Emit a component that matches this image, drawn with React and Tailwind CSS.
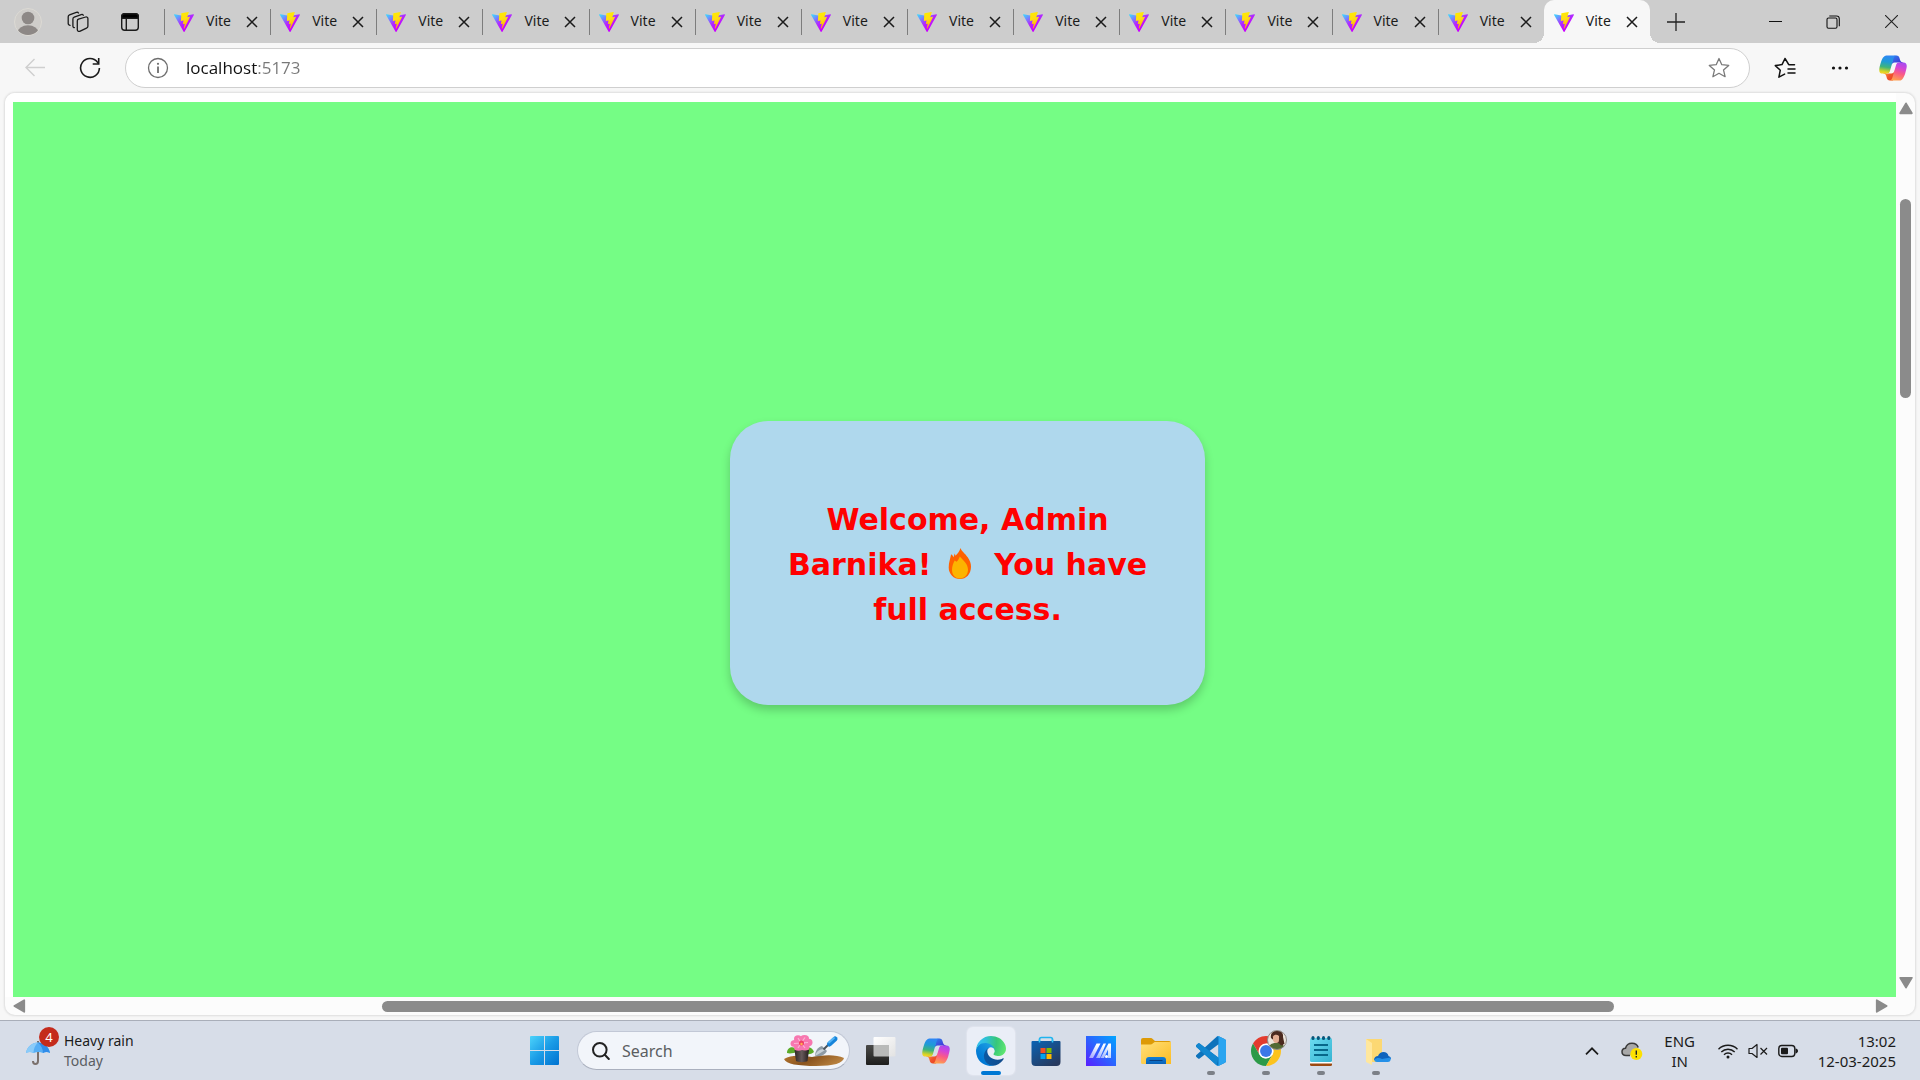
import React from "react";

const TABS = Array.from({ length: 14 }, (_, i) => ({ id: i, title: "Vite", active: i === 13 }));

/* Gradients shared by several icons */
function SharedGradients() {
  return (
    <svg className="absolute h-0 w-0" aria-hidden="true">
      <defs>
        <linearGradient id="viteBody" x1="0" y1="0.1" x2="0.6" y2="0.8">
          <stop offset="0" stopColor="#41d1ff" />
          <stop offset="0.6" stopColor="#b02cff" />
          <stop offset="1" stopColor="#c800ff" />
        </linearGradient>
        <linearGradient id="viteBolt" x1="0.4" y1="0" x2="0.6" y2="1">
          <stop offset="0" stopColor="#ffea00" />
          <stop offset="0.4" stopColor="#ffdd15" />
          <stop offset="1" stopColor="#ffa800" />
        </linearGradient>
        <linearGradient id="copA" x1="0.2" y1="0" x2="0.9" y2="1">
          <stop offset="0" stopColor="#2f7bea" />
          <stop offset="1" stopColor="#4a1fd0" />
        </linearGradient>
        <linearGradient id="copB" x1="0" y1="0.2" x2="1" y2="1">
          <stop offset="0" stopColor="#ffb03a" />
          <stop offset="0.5" stopColor="#f0542d" />
          <stop offset="1" stopColor="#e8401f" />
        </linearGradient>
        <linearGradient id="copC" x1="0.5" y1="0" x2="0.35" y2="1">
          <stop offset="0" stopColor="#2f86f6" />
          <stop offset="0.35" stopColor="#1e9bd6" />
          <stop offset="0.65" stopColor="#3fb57a" />
          <stop offset="0.9" stopColor="#d8d323" />
          <stop offset="1" stopColor="#f3d42b" />
        </linearGradient>
        <linearGradient id="copD" x1="0.7" y1="0" x2="0.4" y2="1">
          <stop offset="0" stopColor="#a64bf0" />
          <stop offset="0.3" stopColor="#d345d6" />
          <stop offset="0.6" stopColor="#fa5b86" />
          <stop offset="1" stopColor="#ffa04e" />
        </linearGradient>
      </defs>
    </svg>
  );
}

function ViteLogo() {
  return (
    <svg className="h-5 w-5 shrink-0" viewBox="0 0 256 257" aria-hidden="true">
      <path
        fill="url(#viteBody)"
        d="M255.153 37.938L134.897 252.976c-2.483 4.44-8.862 4.466-11.382.048L.875 37.958c-2.746-4.814 1.371-10.646 6.827-9.67l120.385 21.517a6.537 6.537 0 0 0 2.322-.004l117.867-21.483c5.438-.991 9.574 4.796 6.877 9.62Z"
      />
      <path
        fill="url(#viteBolt)"
        d="M185.432.063L96.44 17.501a3.268 3.268 0 0 0-2.634 3.014l-5.474 92.456a3.268 3.268 0 0 0 3.997 3.378l24.777-5.718c2.318-.535 4.413 1.507 3.936 3.838l-7.361 36.047c-.495 2.426 1.782 4.5 4.151 3.78l15.304-4.649c2.372-.72 4.652 1.36 4.15 3.788l-11.698 56.621c-.732 3.542 3.979 5.473 5.943 2.437l1.313-2.028l72.516-144.72c1.215-2.423-.88-5.186-3.54-4.672l-25.505 4.922c-2.396.462-4.435-1.77-3.759-4.114l16.646-57.705c.677-2.35-1.37-4.583-3.769-4.113Z"
      />
    </svg>
  );
}

function CopilotLogo() {
  return (
    <svg className="h-[30px] w-[30px]" viewBox="0 0 48 48" aria-hidden="true">
      <path fill="url(#copA)" d="M34.142 7.325A4.63 4.63 0 0 0 29.7 4h-1.35a4.63 4.63 0 0 0-4.554 3.794L21.48 20.407l.575-1.965a4.63 4.63 0 0 1 4.444-3.33h7.853l3.294 1.282 3.175-1.283h-.926a4.63 4.63 0 0 1-4.443-3.325l-1.31-4.461z" />
      <path fill="url(#copB)" d="M14.33 40.656A4.63 4.63 0 0 0 18.779 44h2.87a4.63 4.63 0 0 0 4.629-4.51l.312-12.163-.654 2.233a4.63 4.63 0 0 1-4.443 3.329h-7.919l-2.823-1.532-3.057 1.532h.912a4.63 4.63 0 0 1 4.447 3.344l1.279 4.423z" />
      <path fill="url(#copC)" d="M29.5 4H13.46c-4.583 0-7.332 6.057-9.165 12.113C2.123 23.29-.72 32.885 7.503 32.885h6.925a4.63 4.63 0 0 0 4.456-3.358 2077.9 2077.9 0 0 1 4.971-17.156c.843-2.843 1.544-5.284 2.621-6.805C27.08 4.714 28.086 4 29.5 4z" />
      <path fill="url(#copD)" d="M18.498 44h16.04c4.582 0 7.332-6.058 9.165-12.115 2.171-7.177 5.013-16.775-3.208-16.775h-6.926a4.63 4.63 0 0 0-4.456 3.358 2084.036 2084.036 0 0 1-4.972 17.16c-.842 2.843-1.543 5.285-2.62 6.806-.604.852-1.61 1.566-3.023 1.566z" />
    </svg>
  );
}

function IconButton({ label, className = "", children }) {
  return (
    <button type="button" aria-label={label} className={`flex shrink-0 items-center justify-center ${className}`}>
      {children}
    </button>
  );
}

function CloseGlyph() {
  return (
    <svg className="h-3 w-3" viewBox="0 0 12 12" fill="none" stroke="#1b1b1b" strokeWidth="1.5" aria-hidden="true">
      <path d="M1 1l10 10M11 1L1 11" />
    </svg>
  );
}

function Tab({ title, active }) {
  return (
    <div className={`relative flex h-full min-w-0 flex-1 items-center pl-2.5 ${active ? "rounded-t-[10px] bg-[#f7f7f7]" : ""}`}>
      {!active && <span className="absolute top-[9px] bottom-2 left-0 w-px bg-[#7d7d7d]" />}
      {active && (
        <>
          <span className="absolute bottom-0 -left-2.5 h-2.5 w-2.5 bg-[radial-gradient(circle_at_0_0,#cdcdcd_10px,#f7f7f7_10px)]" />
          <span className="absolute -right-2.5 bottom-0 h-2.5 w-2.5 bg-[radial-gradient(circle_at_100%_0,#cdcdcd_10px,#f7f7f7_10px)]" />
        </>
      )}
      <ViteLogo />
      <span className="ml-3 w-[26px] pb-0.5 text-[14px] leading-5 text-[#1b1b1b]">{title}</span>
      <IconButton label="Close tab" className="ml-2 h-6 w-6">
        <CloseGlyph />
      </IconButton>
    </div>
  );
}

function TitleBar() {
  return (
    <header className="flex h-[43px] shrink-0 items-center bg-[#cdcdcd]">
      <IconButton label="Profile" className="ml-3.5 h-7 w-7">
        <svg className="h-7 w-7" viewBox="0 0 28 28" aria-hidden="true">
          <clipPath id="profileClip"><circle cx="14" cy="14" r="13" /></clipPath>
          <circle cx="14" cy="14" r="13.5" fill="#cfcdca" stroke="#dcdad4" />
          <circle cx="14" cy="10" r="6.3" fill="#8d8886" />
          <ellipse cx="14" cy="24.5" rx="10.5" ry="7.2" fill="#8d8886" clipPath="url(#profileClip)" />
        </svg>
      </IconButton>
      <IconButton label="Workspaces" className="ml-5 h-8 w-8">
        <svg className="h-[22px] w-[22px]" viewBox="0 0 22 22" fill="none" stroke="#1b1b1b" strokeWidth="1.3" strokeLinejoin="round" strokeLinecap="round" aria-hidden="true">
          <path d="M11.5 8.2 18.7 6a1.7 1.7 0 0 1 2.2 1.6v7.6a2 2 0 0 1-1.4 1.9l-6.8 3.2a1.7 1.7 0 0 1-2.4-1.5V9.9a1.8 1.8 0 0 1 1.2-1.7z" />
          <path d="M7.4 16.6c-.7 0-1.5-.6-1.5-1.6V8a2 2 0 0 1 1.3-1.9l7-2.5c.9-.3 1.7 0 2.1.7" />
          <path d="M3.1 14.3c-1 0-1.9-.6-1.9-1.7V5.8a2 2 0 0 1 1.3-1.9l6.8-2.5c.9-.3 1.8-.1 2.2.6" />
        </svg>
      </IconButton>
      <IconButton label="Tab actions menu" className="ml-5 h-8 w-8">
        <svg className="h-5 w-5" viewBox="0 0 20 20" fill="none" stroke="#1b1b1b" strokeWidth="1.4" aria-hidden="true">
          <rect x="1.7" y="1.7" width="16.6" height="16.6" rx="3" />
          <path d="M1.7 6.3V4.5a2.8 2.8 0 0 1 2.8-2.8h11a2.8 2.8 0 0 1 2.8 2.8v1.8z" fill="#000" />
          <path d="M6.3 6v12" />
        </svg>
      </IconButton>
      <nav className="ml-[18px] flex h-full min-w-0 flex-1" aria-label="Tabs">
        {TABS.map((t) => (
          <Tab key={t.id} {...t} />
        ))}
      </nav>
      <IconButton label="New tab" className="ml-2.5 h-8 w-8">
        <svg className="h-[18px] w-[18px]" viewBox="0 0 18 18" stroke="#222" strokeWidth="1.3" aria-hidden="true">
          <path d="M9 0v18M0 9h18" />
        </svg>
      </IconButton>
      <div className="ml-[54px] flex h-full">
        <IconButton label="Minimize" className="h-full w-[58px]">
          <svg className="h-[13px] w-[13px]" viewBox="0 0 13 13" stroke="#111" aria-hidden="true"><path d="M0 6.5h13" /></svg>
        </IconButton>
        <IconButton label="Restore" className="h-full w-[58px]">
          <svg className="h-[14px] w-[14px]" viewBox="0 0 14 14" fill="none" stroke="#111" strokeWidth="1.1" aria-hidden="true">
            <rect x="1" y="3" width="10" height="10.3" rx="1.5" />
            <path d="M3.3 1h7.2a2.8 2.8 0 0 1 2.8 2.8v7.4" />
          </svg>
        </IconButton>
        <IconButton label="Close" className="h-full w-[58px]">
          <svg className="h-[13px] w-[13px]" viewBox="0 0 13 13" stroke="#222" strokeWidth="1.1" aria-hidden="true"><path d="M0 0l13 13M13 0L0 13" /></svg>
        </IconButton>
      </div>
    </header>
  );
}

function Toolbar() {
  return (
    <div className="flex h-[50px] shrink-0 items-center bg-[#f7f7f7]">
      <IconButton label="Back" className="ml-[19px] h-8 w-8">
        <svg className="h-5 w-5" viewBox="0 0 20 20" fill="none" stroke="#cfcfcf" strokeWidth="1.4" aria-hidden="true">
          <path d="M20 9.5H1M9.5 1 1 9.5l8.5 8.5" />
        </svg>
      </IconButton>
      <IconButton label="Refresh" className="ml-[23px] h-8 w-8">
        <svg className="h-[22px] w-[22px]" viewBox="0 0 22 22" fill="none" stroke="#1b1b1b" strokeWidth="1.6" aria-hidden="true">
          <path d="M20.4 11A9.4 9.4 0 1 1 18.6 5.4L19.6 6.6" />
          <path d="M19.7 1v6h-6" />
        </svg>
      </IconButton>
      <div className="ml-[19px] flex h-10 min-w-0 flex-1 items-center rounded-full border border-[#cfcfcf] bg-white pr-[19px] pl-[21px]">
        <IconButton label="View site information" className="h-[22px] w-[22px]">
          <svg className="h-[22px] w-[22px]" viewBox="0 0 22 22" fill="none" stroke="#6e6e6e" strokeWidth="1.3" aria-hidden="true">
            <circle cx="11" cy="11" r="9.5" />
            <path d="M11 9.5V16" strokeWidth="1.8" />
            <circle cx="11" cy="6.8" r="1.1" fill="#6e6e6e" stroke="none" />
          </svg>
        </IconButton>
        <input
          type="text"
          aria-label="Address"
          defaultValue="localhost:5173"
          className="ml-[17px] h-7 min-w-0 flex-1 bg-[linear-gradient(to_right,#111111_71px,#777777_71px)] bg-clip-text pb-px font-['Open_Sans','Noto_Sans',sans-serif] text-[17px] text-transparent outline-none"
        />
        <IconButton label="Add to favorites" className="h-[22px] w-[22px]">
          <svg className="h-[22px] w-[22px]" viewBox="0 0 22 22" fill="none" stroke="#7a7a7a" strokeWidth="1.3" strokeLinejoin="round" aria-hidden="true">
            <path d="m11 1.5 2.8 6.2 6.9.7-5.2 4.5 1.6 6.800-6.100-3.400-6.100 3.400 1.600-6.800L1.300 8.400l6.900-.7z" />
          </svg>
        </IconButton>
      </div>
      <IconButton label="Favorites" className="ml-[19px] h-8 w-8">
        <svg className="h-[22px] w-[22px]" viewBox="0 0 22 22" fill="none" stroke="#111" strokeWidth="1.5" strokeLinejoin="round" strokeLinecap="round" aria-hidden="true">
          <path d="M14.8 7.6 11 1.5 8 7.6 1.3 8.6l5 4.6-1.4 7 5.7-3.1M14 6.5l.8 1.2h5.7M14 12h7M14 16h7" />
        </svg>
      </IconButton>
      <IconButton label="Settings and more" className="ml-[23px] h-8 w-8">
        <svg className="h-1 w-[18px]" viewBox="0 0 18 4" fill="#111" aria-hidden="true">
          <circle cx="2.5" cy="2" r="1.6" /><circle cx="9" cy="2" r="1.6" /><circle cx="15.5" cy="2" r="1.6" />
        </svg>
      </IconButton>
      <IconButton label="Copilot" className="mr-[11px] ml-[21px] h-8 w-8">
        <CopilotLogo />
      </IconButton>
    </div>
  );
}

function FlameIcon() {
  return (
    <svg className="mr-3 ml-1.5 inline-block h-[31px] w-[24px] align-[-4px]" viewBox="0 0 24 31" role="img" aria-label="fire">
      <path fill="#ff6200" d="M12.5 0c.8 3 4.5 5.400 7.200 9.300 2.300 3.300 3.300 6.300 3.300 9.400C23 26 18.200 31 12 31S.7 26.200.7 19.500C.7 14 2.300 11 3.100 6.200c1.200.8 2 1.800 2.400 3l1.300-3.600.7 2.200C9.800 5.500 11.600 3.200 12.500 0z" />
      <path fill="#fcb400" d="M11.800 8.500c3.600 4 8.200 7.300 8.200 13.300 0 5-3.600 8.600-8 8.600s-8-3.500-8-8.500c0-3.700 1.300-7 2.700-9.400l1.800 1.300c1.500-1.300 2.600-3.100 3.300-5.300z" />
    </svg>
  );
}

function Triangle({ className, d }) {
  return (
    <svg className={className} viewBox="0 0 12 12" fill="#8b8b8b" stroke="#8b8b8b" strokeWidth="1.5" strokeLinejoin="round" aria-hidden="true">
      <path d={d} />
    </svg>
  );
}

function Viewport() {
  return (
    <main className="flex min-h-0 flex-1 flex-col bg-[#f7f7f7] px-[5px] pb-[5px]">
      <div className="flex min-h-0 flex-1 flex-col overflow-hidden rounded-[10px] bg-[#fcfcfc] shadow-[0_0_2px_1px_#dedede]">
        <div className="flex min-h-0 flex-1">
          <div className="flex min-w-0 flex-1 bg-white pt-[9px] pl-2">
            <section className="flex min-w-0 flex-1 items-center justify-center bg-[#75fd85] pl-[26px]">
              <div className="mt-[27px] flex w-[475px] items-center justify-center rounded-[38px] bg-[#afd8ed] px-12 pt-[76px] pb-[73px] shadow-[0_5px_10px_rgba(0,0,0,0.2)]">
                <h1 className="text-center font-['Verdana','DejaVu_Sans',sans-serif] text-[30px] leading-[45px] font-bold text-[#ff0000]">
                  Welcome, Admin
                  <br />
                  Barnika! <FlameIcon /> You have
                  <br />
                  full access.
                </h1>
              </div>
            </section>
          </div>
          <div className="flex w-[19px] shrink-0 flex-col items-center pt-2">
            <IconButton label="Scroll up" className="h-3.5 w-full">
              <Triangle className="h-3.5 w-3.5" d="M6 2 11 10.500H1z" />
            </IconButton>
            <div className="flex min-h-0 flex-1 flex-col">
              <div className="flex-[84]" />
              <div className="w-[11px] flex-[198] rounded-full bg-[#8b8b8b]" />
              <div className="flex-[577]" />
            </div>
            <IconButton label="Scroll down" className="mb-[7px] h-3.5 w-full">
              <Triangle className="h-3.5 w-3.5" d="M6 10 11 1.500H1z" />
            </IconButton>
          </div>
        </div>
        <div className="flex h-[18px] shrink-0 items-center pr-[26px] pl-[7px]">
          <IconButton label="Scroll left" className="h-full w-3.5">
            <Triangle className="h-3.5 w-3.5" d="M2 6 10.500 1v10z" />
          </IconButton>
          <div className="flex min-w-0 flex-1">
            <div className="flex-[356]" />
            <div className="h-[11px] flex-[1231] rounded-full bg-[#8b8b8b]" />
            <div className="flex-[261]" />
          </div>
          <IconButton label="Scroll right" className="h-full w-3.5">
            <Triangle className="h-3.5 w-3.5" d="M10 6 1.500 1v10z" />
          </IconButton>
        </div>
      </div>
    </main>
  );
}

function UmbrellaIcon() {
  return (
    <svg className="h-6 w-6" viewBox="0 0 24 24" fill="none" aria-hidden="true">
      <path d="M12 0v20c0 2-1 3-2.600 3S7 22 7 20" stroke="#7a706c" strokeWidth="2" />
      <path d="M0 12C1 6 6 1.500 12 1.500S23 6 24 12c-2-1.300-5-1.300-7 0-3-1.200-6-1.200-9.500 0-2.500-1.200-5-1.200-7.500 0z" fill="#56aef5" />
      <path d="M0 12C1 6 6 1.500 12 1.500 9 4 7.500 8 7.500 12c-2.500-1.200-5-1.200-7.500 0z" fill="#8acbf9" />
      <path d="M12 1.500C18 1.500 23 6 24 12c-2-1.300-5-1.300-7 0 0-4-2-8-5-10.500z" fill="#2f8cea" />
    </svg>
  );
}

function StartIcon() {
  return (
    <svg className="h-[29px] w-[29px]" viewBox="0 0 29 29" aria-hidden="true">
      <defs>
        <linearGradient id="start" gradientUnits="userSpaceOnUse" x1="0" y1="0" x2="29" y2="29">
          <stop offset="0" stopColor="#4cd3fb" />
          <stop offset="0.5" stopColor="#1a9be6" />
          <stop offset="1" stopColor="#0072d0" />
        </linearGradient>
      </defs>
      <path fill="url(#start)" d="M1 0h13v14H0V1a1 1 0 0 1 1-1zM15 0h13a1 1 0 0 1 1 1v13H15zM0 15h14v14H1a1 1 0 0 1-1-1zM15 15h14v13a1 1 0 0 1-1 1H15z" />
    </svg>
  );
}

function GardenArt() {
  return (
    <svg className="h-[31px] w-[60px] shrink-0" viewBox="0 0 60 31" aria-hidden="true">
      <defs>
        <linearGradient id="soil" x1="0" y1="0" x2="1" y2="0.3">
          <stop offset="0" stopColor="#b5762f" />
          <stop offset="0.5" stopColor="#8a541f" />
          <stop offset="1" stopColor="#b7803e" />
        </linearGradient>
        <linearGradient id="pot" x1="0" x2="1">
          <stop offset="0" stopColor="#2f2826" />
          <stop offset="0.5" stopColor="#66595a" />
          <stop offset="1" stopColor="#231d1c" />
        </linearGradient>
      </defs>
      <path fill="url(#soil)" d="M0 24c8-5 18-3 28-2 10-2 24-3 32 1-1 5-10 8-28 8S2 29 0 24z" />
      <path fill="#5cab2a" d="M3 18c0-4 3-7 8-5l2 4c-3 1-7 2-10 1zM30 17c-1-3-4-6-8-4l-1 4c2 3 5 3 9 0z" />
      <path fill="url(#pot)" d="M10.5 15h14.5l-1.5 11c-2 1.5-9.5 1.5-11.5 0z" />
      <g fill="#f777b0">
        <ellipse cx="11" cy="8.500" rx="4.500" ry="3.500" /><ellipse cx="14" cy="4" rx="4" ry="3.700" /><ellipse cx="20.500" cy="3.500" rx="4.500" ry="3.500" /><ellipse cx="24.500" cy="7.500" rx="4" ry="3.700" /><ellipse cx="21" cy="12" rx="4.500" ry="3.500" /><ellipse cx="14.500" cy="12.500" rx="4.500" ry="3.200" />
      </g>
      <path stroke="#fbb4d4" strokeWidth="1.2" d="M17 8l-7 .5M17 8l-3-5M17 8l4-5.500M17 8l7-.5M17 8l4 5M17 8l-3 5" />
      <circle cx="17.5" cy="8" r="2.600" fill="#ef4268" /><circle cx="17.500" cy="9" r="1.200" fill="#ffb14f" />
      <path fill="#8d9aa5" d="M31 21c0-5 3-9 7-10l5 5c-2 4-6 6-12 5z" />
      <path fill="#c6d0d8" d="M31 21c1-4 4-7 9-7l1 1c-3 2-6 4-10 6z" />
      <path stroke="#49525b" strokeWidth="2" d="m39.5 14.5 5-5" />
      <path stroke="#1684da" strokeWidth="5" strokeLinecap="round" d="m45.5 9 5.500-5" />
      <path stroke="#54b4f6" strokeWidth="1.8" strokeLinecap="round" d="m45 7.500 5-4.500" />
    </svg>
  );
}

function TaskViewIcon() {
  return (
    <svg className="h-[30px] w-[30px]" viewBox="0 0 30 30" aria-hidden="true">
      <defs>
        <linearGradient id="tvDark" x1="0" y1="0" x2="0" y2="1"><stop offset="0" stopColor="#4a4a48" /><stop offset="1" stopColor="#1e1e1d" /></linearGradient>
        <linearGradient id="tvLight" x1="0" y1="0" x2="1" y2="1"><stop offset="0" stopColor="#ffffff" /><stop offset="1" stopColor="#e2e2e2" /></linearGradient>
      </defs>
      <rect x="7.5" y="1" width="22" height="19.5" rx="1" fill="url(#tvLight)" />
      <rect x="0" y="9" width="23" height="20" rx="1" fill="url(#tvDark)" />
      <path d="M7.5 9H23v11.500H8.500a1 1 0 0 1-1-1z" fill="#b9bab9" />
    </svg>
  );
}

function EdgeIcon() {
  return (
    <svg className="h-[30px] w-[30px]" viewBox="0 0 256 256" aria-hidden="true">
      <defs>
        <linearGradient id="edgeA" x1="58" y1="177" x2="236" y2="177" gradientUnits="userSpaceOnUse"><stop offset="0" stopColor="#0c59a4" /><stop offset="1" stopColor="#114a8b" /></linearGradient>
        <linearGradient id="edgeB" x1="150" y1="98" x2="45" y2="212" gradientUnits="userSpaceOnUse"><stop offset="0" stopColor="#1b9de2" /><stop offset="0.2" stopColor="#1595df" /><stop offset="0.7" stopColor="#0680d7" /><stop offset="1" stopColor="#0078d4" /></linearGradient>
        <radialGradient id="edgeC" cx="26" cy="47" r="250" gradientUnits="userSpaceOnUse"><stop offset="0" stopColor="#35c1f1" /><stop offset="0.25" stopColor="#2fc0d8" /><stop offset="0.6" stopColor="#36c77a" /><stop offset="1" stopColor="#66eb6e" /></radialGradient>
      </defs>
      <path fill="url(#edgeA)" d="M231 190.500c-3.400 1.800-6.900 3.400-10.500 4.700a101.500 101.500 0 0 1-35.900 6.500c-47.300 0-88.500-32.500-88.500-74.300a31.500 31.500 0 0 1 16.400-27.300c-42.800 1.800-53.800 46.400-53.800 72.500 0 74 68.100 81.400 82.800 81.400 7.900 0 19.800-2.300 27-4.600l1.300-.4a128.300 128.300 0 0 0 66.600-52.800 4 4 0 0 0-5.400-5.700z" />
      <path fill="url(#edgeB)" d="M105.700 241.400a79.200 79.200 0 0 1-22.700-21.300 80.700 80.700 0 0 1 29.500-120c3.200-1.500 8.500-4.100 15.600-4a32.400 32.400 0 0 1 25.700 13 31.900 31.900 0 0 1 6.300 18.700c0-.2 24.500-79.600-80-79.600-43.900 0-80 41.600-80 78.200a130.200 130.200 0 0 0 12.100 56 128 128 0 0 0 156.400 67 75.500 75.500 0 0 1-62.800-8z" />
      <path fill="url(#edgeC)" d="M152.300 148.900c-.9 1-3.400 2.500-3.400 5.600 0 2.600 1.700 5.200 4.800 7.300 14.300 10 41.400 8.600 41.500 8.600a59.600 59.600 0 0 0 30.300-8.300 61.400 61.400 0 0 0 30.400-52.900c.3-22.400-8-37.300-11.300-43.900C223.500 23.900 177.700 0 128 0A128 128 0 0 0 0 126.200c.5-36.500 36.800-66 80-66 3.500 0 23.500.3 42 10a72.600 72.600 0 0 1 30.900 29.300c6.100 10.600 7.200 24.100 7.200 29.500s-2.700 13.300-7.800 19.900z" />
    </svg>
  );
}

function StoreIcon() {
  return (
    <svg className="h-[30px] w-[30px]" viewBox="0 0 30 30" aria-hidden="true">
      <defs>
        <linearGradient id="bag" x1="0" y1="0" x2="0.7" y2="1"><stop offset="0" stopColor="#0a63b4" /><stop offset="1" stopColor="#273a5f" /></linearGradient>
      </defs>
      <path d="M8.500 6.500v-3a2 2 0 0 1 2-2h9a2 2 0 0 1 2 2v3" fill="none" stroke="#1fb4ee" strokeWidth="1.6" />
      <path fill="url(#bag)" d="M1.500 5h27a1 1 0 0 1 1 1v20a4 4 0 0 1-4 4h-21a4 4 0 0 1-4-4V6a1 1 0 0 1 1-1z" />
      <path fill="none" stroke="#2bc3f5" strokeWidth="1.600" d="M8.500 3.500v3M21.500 3.500v3" />
      <path fill="#f25022" d="M9.500 12h5v5h-5z" /><path fill="#7fba00" d="M15.500 12h5v5h-5z" />
      <path fill="#00a4ef" d="M9.500 18h5v5h-5z" /><path fill="#ffb900" d="M15.500 18h5v5h-5z" />
    </svg>
  );
}

function AsusIcon() {
  return (
    <svg className="h-[30px] w-[30px]" viewBox="0 0 30 30" aria-hidden="true">
      <defs>
        <linearGradient id="myasus" x1="0" y1="1" x2="1" y2="0"><stop offset="0" stopColor="#5a1eff" /><stop offset="0.5" stopColor="#2b64ff" /><stop offset="1" stopColor="#00a6ff" /></linearGradient>
        <linearGradient id="asusStroke" x1="0" y1="1" x2="0.5" y2="0"><stop offset="0" stopColor="#ffffff" stopOpacity="0.5" /><stop offset="1" stopColor="#ffffff" /></linearGradient>
      </defs>
      <path fill="url(#myasus)" d="M0 0h30v30H0z" />
      <path fill="url(#asusStroke)" d="M3 22 10.500 7.500h4L7 22z" />
      <path fill="url(#asusStroke)" d="M10 22 17.500 7.500H20L14 22z" />
      <path fill="url(#asusStroke)" d="M14.500 22 22.500 7.500H25V22h-3v-8.500L18 22z" />
      <circle cx="20.500" cy="20.500" r="1.500" fill="#fff" />
    </svg>
  );
}

function FolderIcon() {
  return (
    <svg className="h-[30px] w-[30px]" viewBox="0 0 30 30" aria-hidden="true">
      <defs>
        <linearGradient id="folder" x1="0" y1="0" x2="1" y2="1"><stop offset="0" stopColor="#ffe07a" /><stop offset="1" stopColor="#fcbc23" /></linearGradient>
        <linearGradient id="folderTray" x1="0" y1="0" x2="0" y2="1"><stop offset="0" stopColor="#0f7fd8" /><stop offset="1" stopColor="#0a62b8" /></linearGradient>
      </defs>
      <path fill="#dd9a06" d="M0 4a2 2 0 0 1 2-2h7.500c1 0 1.500.4 2.200 1L14 5h14a2 2 0 0 1 2 2v5H0z" />
      <path fill="url(#folder)" d="M0 8.500h9.500c1 0 1.600-.4 2.200-.9l1.600-1.300c.4-.3.800-.3 1.200-.3H30v22H1.500A1.500 1.500 0 0 1 0 26.500z" />
      <path fill="url(#folderTray)" d="M5 24a3 3 0 0 1 3-3h14a3 3 0 0 1 3 3v4H5z" />
      <path stroke="#083f80" d="M8.500 24.500h13" />
    </svg>
  );
}

function VSCodeIcon() {
  return (
    <svg className="h-[30px] w-[30px]" viewBox="0 0 24 24" aria-hidden="true">
      <path fill="#0d72bb" d="M23.150 2.587L18.210.21a1.494 1.494 0 0 0-1.705.29l-9.460 8.630-4.120-3.128a.999.999 0 0 0-1.276.057L.327 7.261A1 1 0 0 0 .326 8.740L3.899 12 .326 15.260a1 1 0 0 0 .001 1.479L1.650 17.940a.999.999 0 0 0 1.276.057l4.120-3.128 9.460 8.630a1.492 1.492 0 0 0 1.704.29l4.942-2.377A1.500 1.500 0 0 0 24 20.060V3.939a1.500 1.500 0 0 0-.85-1.352zm-5.146 14.861L10.826 12l7.178-5.448v10.896z" />
      <path fill="#1287d0" d="m.326 8.740 16.180 14.760 1.498-6.052L2.926 6.002a1 1 0 0 0-1.276.057L.327 7.261a1 1 0 0 0 0 1.479z" />
      <path fill="#2aa5f0" d="M18.004 1.500v21c0 .9-.9 1.300-1.500 1 .5.5 1.200.6 1.705.29l4.942-2.377A1.500 1.500 0 0 0 24 20.060V3.939a1.500 1.500 0 0 0-.85-1.352L18.210.21A1.494 1.494 0 0 0 16.505.5c.6-.3 1.500.1 1.500 1z" />
    </svg>
  );
}

function ChromeIcon() {
  return (
    <svg className="h-[30px] w-[30px]" viewBox="0 0 48 48" aria-hidden="true">
      <path fill="#e33b2e" d="M24 0C15.100 0 7.400 4.800 3.200 12l10.400 18L24 12h20.800C40.600 4.800 32.900 0 24 0z" />
      <path fill="#2c9a48" d="M3.200 12C1.200 15.500 0 19.600 0 24c0 13.200 10.700 24 24 24l10.400-18-10.400 6c-4.400 0-8.300-2.400-10.400-6z" />
      <path fill="#fcc31e" d="M44.800 12H24c6.600 0 12 5.400 12 12 0 2.200-.6 4.300-1.600 6L24 48c13.200 0 24-10.800 24-24 0-4.400-1.200-8.500-3.200-12z" />
      <circle cx="24" cy="24" r="12" fill="#fff" />
      <circle cx="24" cy="24" r="9.500" fill="#3b78e7" />
    </svg>
  );
}

function AvatarBadge() {
  return (
    <svg className="h-5 w-5" viewBox="0 0 20 20" aria-hidden="true">
      <clipPath id="avatarClip"><circle cx="10" cy="10" r="9.5" /></clipPath>
      <circle cx="10" cy="10" r="9.5" fill="#ece5dc" />
      <g clipPath="url(#avatarClip)">
        <path fill="#4b2a20" d="M4 8c-1-4 2-7.500 6.500-7.500S16.500 4 16 7l1.500 7H11z" />
        <path fill="#e3ad92" d="M6 6.500c1-2 4-2.500 6-.5v4c0 2-1 3-3 3S6 11 6 9.500z" />
        <path fill="#526a34" d="M1 20c0-5 4-7 8-7s9 1 9 7z" />
        <path fill="#4b2a20" d="M12 5c3 1 3 6 4.500 10-2 1-4 0-4.500-3z" />
      </g>
      <circle cx="10" cy="10" r="9.5" fill="none" stroke="#8f8b88" />
    </svg>
  );
}

function NotepadIcon() {
  return (
    <svg className="h-[30px] w-[22px]" viewBox="0 0 22 30" aria-hidden="true">
      <defs>
        <linearGradient id="pad" x1="0" y1="0" x2="1" y2="1"><stop offset="0" stopColor="#6bdcf0" /><stop offset="1" stopColor="#36b3d2" /></linearGradient>
      </defs>
      <path fill="#9c4a12" d="M0 26h22v2.500a1.500 1.500 0 0 1-1.500 1.500h-19A1.500 1.500 0 0 1 0 28.500z" />
      <path fill="#fff" d="M0 25h22v2.500H0z" />
      <rect y="2" width="22" height="24" rx="1.5" fill="url(#pad)" />
      <path stroke="#07688a" strokeWidth="1.8" d="M4 9h14M4 14h14M4 19h14" />
      <g fill="#07567a">
        <rect x="1.500" y="0" width="3" height="4" rx="1.5" /><rect x="6.800" y="0" width="3" height="4" rx="1.5" /><rect x="12" y="0" width="3" height="4" rx="1.5" /><rect x="17.300" y="0" width="3" height="4" rx="1.5" />
      </g>
    </svg>
  );
}

function CloudFolderIcon() {
  return (
    <svg className="h-[30px] w-[30px]" viewBox="0 0 30 30" aria-hidden="true">
      <path fill="#fcd873" d="M5 3h16v23H5z" />
      <path fill="#ffe79d" d="m5 3 6 4v22l-6-3z" />
      <path fill="#0f63bd" d="M13 24c0-2.500 2-4 4-4 1-2.500 3-4 5.500-4s4.500 1.500 5 4c1.500.3 2.500 1.500 2.500 3z" />
      <path fill="#2490e8" d="M13.500 23.500c2-2 5-2 7.500-.5l8.500-1.500c.5.800.5 4.500-2.500 4.500H16c-2 0-3-1-2.500-2.500z" />
    </svg>
  );
}

const APPS = [
  { name: "Task view", icon: <TaskViewIcon /> },
  { name: "Copilot", icon: <CopilotLogo /> },
  { name: "Microsoft Edge", icon: <EdgeIcon />, active: true },
  { name: "Microsoft Store", icon: <StoreIcon /> },
  { name: "MyASUS", icon: <AsusIcon /> },
  { name: "File Explorer", icon: <FolderIcon /> },
  { name: "Visual Studio Code", icon: <VSCodeIcon />, running: true },
  { name: "Google Chrome", icon: <ChromeIcon />, running: true, badge: <AvatarBadge /> },
  { name: "Notepad", icon: <NotepadIcon />, running: true },
  { name: "OneDrive folder", icon: <CloudFolderIcon />, running: true },
];

function AppButton({ name, icon, active, running, badge }) {
  return (
    <IconButton label={name} className={`relative h-12 w-12 rounded-md ${active ? "bg-[#eaeef7] shadow-[0_0_1px_1px_#e0e4ee]" : ""}`}>
      {icon}
      {badge && <span className="absolute top-[3px] right-[3px]">{badge}</span>}
      {active && <span className="absolute bottom-0 left-3.5 h-1 w-5 rounded-full bg-[#0078d4]" />}
      {running && <span className="absolute bottom-0 left-5 h-1 w-2 rounded-full bg-[#7c8087]" />}
    </IconButton>
  );
}

function Taskbar() {
  return (
    <footer className="flex h-[60px] shrink-0 items-center border-t border-[#a9aeb9] bg-[#d7dde8] text-[#1b1b1b]">
      <div className="flex min-w-0 flex-1">
        <button type="button" className="ml-[26px] flex items-center text-left text-[14px] leading-5">
          <span className="relative block pt-1">
            <UmbrellaIcon />
            <span className="absolute -top-2.5 left-[13px] flex h-5 w-5 items-center justify-center rounded-full bg-[#c42b1c] text-[13px] text-white">4</span>
          </span>
          <span className="ml-3.5">
            <span className="block">Heavy rain</span>
            <span className="block text-[#5a5d63]">Today</span>
          </span>
        </button>
      </div>
      <div className="flex shrink-0 items-center gap-[7px]">
        <IconButton label="Start" className="h-12 w-12">
          <StartIcon />
        </IconButton>
        <label className="ml-0.5 flex h-[39px] w-[273px] items-center rounded-full border border-[#c2c8d6] border-b-[#aab0be] bg-[#f2f5fa] pr-[5px] pl-3.5">
          <svg className="h-[18px] w-[18px] shrink-0" viewBox="0 0 18 18" fill="none" stroke="#222" strokeWidth="2" strokeLinecap="round" aria-hidden="true">
            <circle cx="7.800" cy="7.800" r="6.800" />
            <path d="m12.800 12.800 4 4.200" />
          </svg>
          <input type="text" aria-label="Search" placeholder="Search" className="ml-3 min-w-0 flex-1 bg-transparent text-[16px] outline-none placeholder:text-[#5b5d61]" />
          <GardenArt />
        </label>
        {APPS.map((a) => (
          <AppButton key={a.name} {...a} />
        ))}
      </div>
      <div className="flex min-w-0 flex-1 items-center justify-end text-[15px] leading-5">
        <IconButton label="Show hidden icons" className="h-8 w-8">
          <svg className="h-2 w-3.5" viewBox="0 0 14 8" fill="none" stroke="#1b1b1b" strokeWidth="1.7" aria-hidden="true"><path d="m1 7.300 6-6 6 6" /></svg>
        </IconButton>
        <IconButton label="OneDrive" className="ml-2 h-8 w-8">
          <svg className="h-[18px] w-[22px]" viewBox="0 0 22 18" aria-hidden="true">
            <path d="M9 13.500H5C2.500 13.500 1 12 1 9.800s1.600-3.500 3.500-3.600C5.300 3 7.800 1.200 11 1.200c3.300 0 5.500 1.800 6.200 4.300z" fill="#a8a8a8" />
            <path d="M9 13.500H5C2.500 13.500 1 12 1 9.800s1.600-3.500 3.500-3.600C5.300 3 7.800 1.200 11 1.200c3.300 0 5.500 1.800 6.200 4.300" fill="none" stroke="#3a3a3a" strokeWidth="1.5" />
            <circle cx="15.300" cy="12" r="6" fill="#fde100" />
            <path d="M15.300 8.500v4.300M15.300 14v1.600" stroke="#222" strokeWidth="1.4" />
          </svg>
        </IconButton>
        <button type="button" className="ml-3.5 w-9 text-center">
          ENG
          <br />
          IN
        </button>
        <button type="button" aria-label="Network, volume and battery" className="ml-5 flex items-center gap-2.5">
          <svg className="h-4 w-5" viewBox="0 0 20 16" fill="none" stroke="#1b1b1b" strokeWidth="1.4" aria-hidden="true">
            <path d="M.5 6.200a13.500 13.500 0 0 1 19 0M3.300 9a9.500 9.500 0 0 1 13.400 0M6 11.700a5.600 5.600 0 0 1 8 0" />
            <circle cx="10" cy="14" r="1.500" fill="#1b1b1b" stroke="none" />
          </svg>
          <svg className="h-4 w-5" viewBox="0 0 20 16" fill="none" stroke="#1b1b1b" strokeWidth="1.2" strokeLinejoin="round" aria-hidden="true">
            <path d="M1 5.500h3L9 1.500v13l-5-4H1z" />
            <path d="m12.500 5 6.500 6.500M19 5l-6.500 6.500" />
          </svg>
          <svg className="h-3.5 w-5" viewBox="0 0 20 14" aria-hidden="true">
            <rect x=".8" y="1.500" width="16" height="11" rx="3" fill="none" stroke="#1b1b1b" strokeWidth="1.4" />
            <rect x="3" y="3.800" width="7" height="6.500" rx="1" fill="#1b1b1b" />
            <path d="M17.500 4.500c1.500.3 2.500 1.200 2.500 2.500s-1 2.200-2.500 2.500z" fill="#1b1b1b" />
          </svg>
        </button>
        <button type="button" className="mr-6 ml-5 text-right">
          13:02
          <br />
          12-03-2025
        </button>
      </div>
    </footer>
  );
}

export default function App() {
  return (
    <div className="flex h-screen flex-col overflow-hidden bg-[#f7f7f7] font-['Noto_Sans','Open_Sans',sans-serif]">
      <SharedGradients />
      <TitleBar />
      <Toolbar />
      <Viewport />
      <Taskbar />
    </div>
  );
}
